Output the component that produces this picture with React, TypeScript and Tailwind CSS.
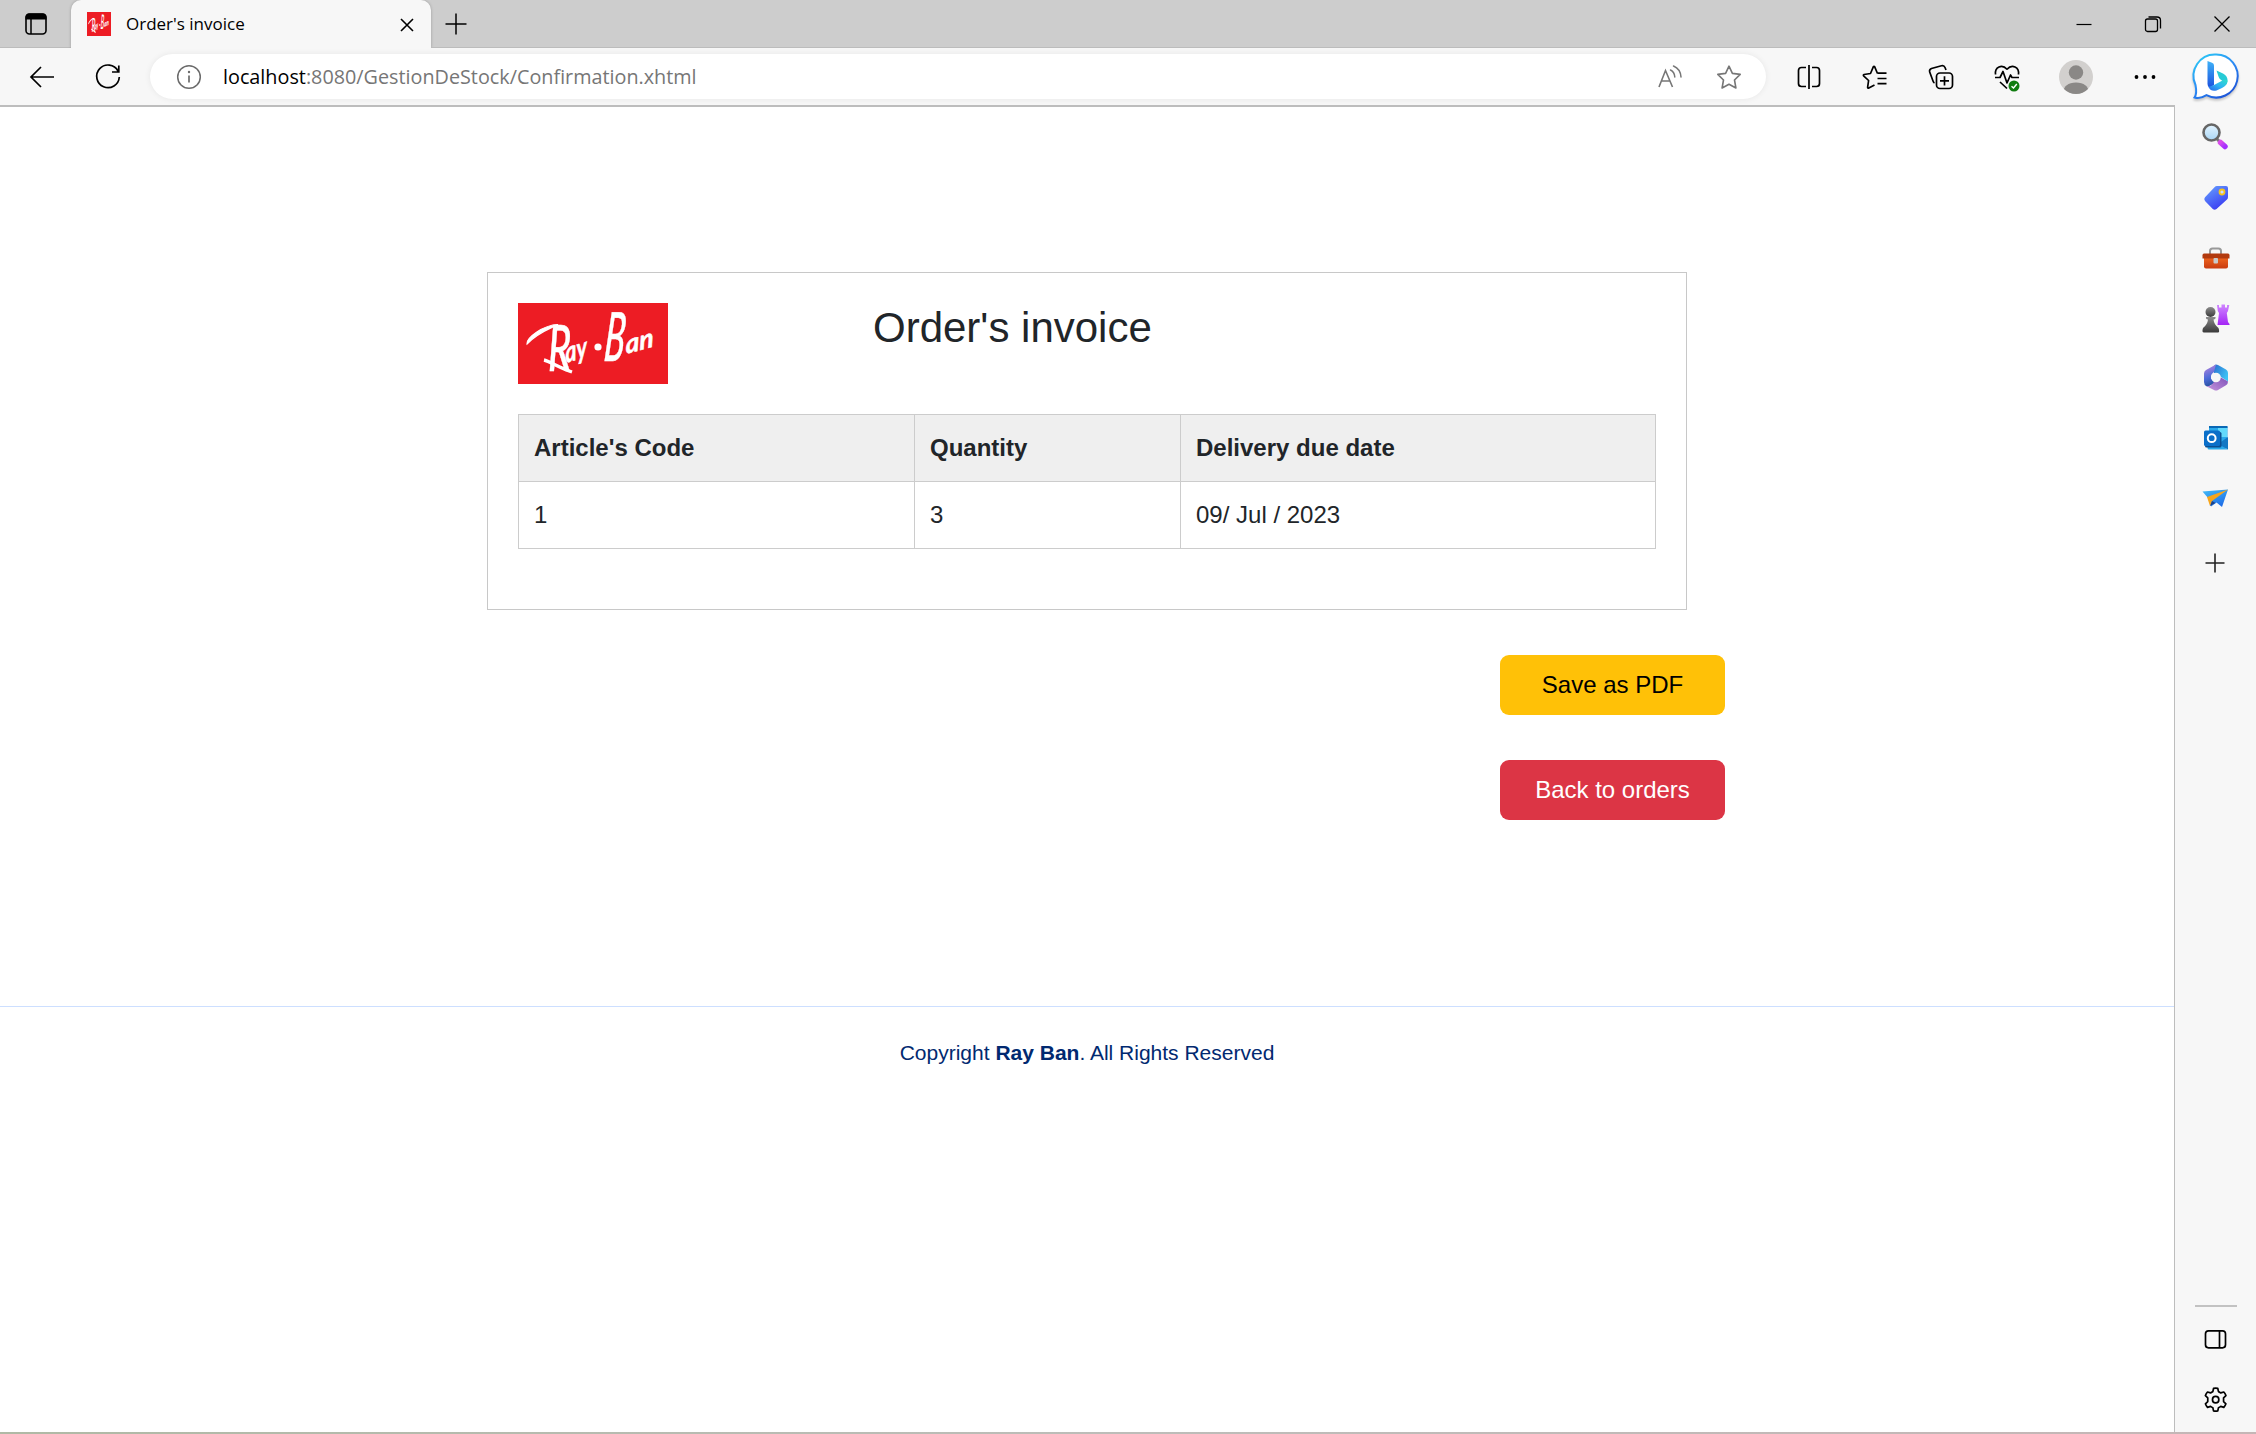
import React from "react";

type IconProps = { w: number; h: number; box?: string; children: React.ReactNode; className?: string };

const Icon = ({ w, h, box, children, className }: IconProps) => (
  <svg width={w} height={h} viewBox={box ?? `0 0 ${w} ${h}`} fill="none" className={"shrink-0 " + (className ?? "")}>
    {children}
  </svg>
);

const star = "M16 5.2 L19.4 12.4 L27.2 13.4 L21.5 19 L22.9 27 L16 23.2 L9.1 27 L10.5 19 L4.8 13.4 L12.6 12.4 Z";

function RayBanLogo({ className }: { className: string }) {
  return (
    <svg viewBox="0 0 150 81" preserveAspectRatio="none" className={"overflow-visible " + className}>
      <rect width="150" height="81" fill="#ed1c24" />
      <path d="M9 41C8 35 25 22 40 21.500C31 26 19 30 9 41Z" fill="#fff" stroke="#fff" strokeWidth="1.200" />
      <path d="M26 57C31 58 42 65 54 69" stroke="#fff" strokeWidth="3.400" fill="none" />
      <circle cx="80" cy="44" r="3.600" fill="#fff" />
      <g fill="#fff" stroke="#fff" strokeWidth="0.500" fontFamily="Lato, sans-serif" fontStyle="italic" fontWeight="500">
        <text transform="translate(30 68) scale(.62 1)" fontSize="64">R</text>
        <text transform="translate(48 60) rotate(-17) skewX(-12) scale(.8 1)" fontSize="28" fontWeight="700">ay</text>
        <text transform="translate(85 58) skewX(-5) scale(.5 1)" fontSize="68">B</text>
        <text transform="translate(108 51) rotate(-15) skewX(-12) scale(1.050 1)" fontSize="26" fontWeight="700">an</text>
      </g>
    </svg>
  );
}

function TabStrip() {
  return (
    <header className="flex h-12 shrink-0 bg-[#cdcdcd]">
      <div className="flex w-[71px] items-center border-b border-[#bcbcbc] pl-[24px]">
        <Icon w={24} h={24}>
          <rect x="2" y="2" width="20" height="20" rx="3.5" stroke="#000" strokeWidth="1.6" />
          <path d="M1.5 7.5V5Q1.5 1.5 5 1.5H19Q22.500 1.500 22.500 5V7.500Z" fill="#000" />
          <path d="M7 7V22" stroke="#000" strokeWidth="1.5" />
        </Icon>
      </div>
      <div className="flex w-[360px] items-center rounded-t-[10px] bg-[#f7f7f7] pl-4 shadow-[0_0_3px_rgba(0,0,0,0.25)]">
        <RayBanLogo className="size-6 shrink-0" />
        <span className="ml-[15px] grow text-[17px] leading-6 text-black">Order's invoice</span>
        <Icon w={24} h={24} className="mr-[12px] mt-px">
          <path d="M6 6L18 18M18 6L6 18" stroke="#000" strokeWidth="1.6" />
        </Icon>
      </div>
      <div className="flex grow items-center border-b border-[#bcbcbc] pl-[13px]">
        <Icon w={24} h={24}>
          <path d="M12 1.500V22.500M1.500 12H22.500" stroke="#000" strokeWidth="1.5" />
        </Icon>
      </div>
      <div className="flex w-[207px] items-center justify-around border-b border-[#bcbcbc]">
        <Icon w={18} h={18}><path d="M1.500 9.500H16.500" stroke="#000" strokeWidth="1.2" /></Icon>
        <Icon w={18} h={18}>
          <rect x="1.500" y="4" width="12" height="12.500" rx="2" stroke="#000" strokeWidth="1.3" />
          <path d="M4.500 2H13Q16.500 2 16.500 5.500V13.500" stroke="#000" strokeWidth="1.3" />
        </Icon>
        <Icon w={18} h={18}><path d="M1.500 1.500L16.500 16.500M16.500 1.500L1.500 16.500" stroke="#000" strokeWidth="1.3" /></Icon>
      </div>
    </header>
  );
}

function BingLogo() {
  return (
    <Icon w={54} h={54} className="-mt-px">
      <defs>
        <linearGradient id="bingRing" x1="0" y1="0" x2="0.7" y2="1">
          <stop offset="0" stopColor="#2bd0f5" /><stop offset="0.55" stopColor="#2b8cf5" /><stop offset="1" stopColor="#1d55d8" />
        </linearGradient>
        <linearGradient id="bingStem" x1="0" y1="0" x2="0" y2="1">
          <stop offset="0" stopColor="#3fb2f8" /><stop offset="1" stopColor="#1b4fdd" />
        </linearGradient>
        <linearGradient id="bingBowl" x1="1" y1="0" x2="0" y2="1">
          <stop offset="0" stopColor="#2ee0c8" /><stop offset="0.5" stopColor="#2fb3f2" /><stop offset="1" stopColor="#2563eb" />
        </linearGradient>
      </defs>
      <path d="M27 5.500A21.500 21.500 0 1 1 17.500 46.200C13 49 9 49.500 5.500 48.500C8 45 7.500 41 6.500 36A21.500 21.500 0 0 1 27 5.500Z" fill="#fff" stroke="url(#bingRing)" strokeWidth="2" className="drop-shadow-[0_2px_1px_rgba(0,0,0,0.2)]" />
      <path d="M18.500 12L23 13.700Q25 14.500 25 16.500V36L20.500 39Q18.500 37.500 18.500 35Z" fill="url(#bingStem)" />
      <path d="M27.500 21.500L34 24.500Q39 27 38.500 32.500Q38 35.500 35.500 37Q35.500 33 31.500 30.500Q30 29.500 29.500 27.500Z" fill="#27cbd6" />
      <path d="M38.500 31.500Q38.500 36 33 39L27.500 41.500Q22 43 19.500 38L25 36L33.500 31.500Q36.500 30 38.500 31.500Z" fill="url(#bingBowl)" />
    </Icon>
  );
}

function Toolbar() {
  return (
    <div className="flex h-[57px] shrink-0 items-center bg-[#f7f7f7]">
      <div className="flex w-[150px] items-center pl-[26px]">
        <Icon w={32} h={32}>
          <path d="M28 16H5M15 6L5 16L15 26" stroke="#000" strokeWidth="1.7" />
        </Icon>
        <Icon w={32} h={32} className="ml-[34px]">
          <path d="M26 10A11.300 11.300 0 1 0 27.300 16M26.800 4.500V11H20" stroke="#000" strokeWidth="1.700" />
        </Icon>
      </div>
      <div className="flex h-[45px] w-[1616px] items-center rounded-full bg-white pl-[23px] shadow-[0_0_6px_rgba(0,0,0,0.07)]">
        <Icon w={32} h={32}>
          <circle cx="16" cy="16" r="11.300" stroke="#6b6b6b" strokeWidth="1.500" />
          <path d="M16 14.500V21.500" stroke="#6b6b6b" strokeWidth="1.700" />
          <circle cx="16" cy="11" r="1.200" fill="#6b6b6b" />
        </Icon>
        <span className="ml-[18px] grow text-[19.8px] leading-7 text-[#767676]">
          <span className="text-black">localhost</span>:8080/GestionDeStock/Confirmation.xhtml
        </span>
        <Icon w={32} h={32} className="mr-[27px]">
          <path d="M5 26L11.500 9.500L18.500 26M7.300 20H16.200" stroke="#767676" strokeWidth="1.600" />
          <path d="M16.500 9Q20.500 11 20.800 16M19.500 5Q26.500 8 27 16" stroke="#767676" strokeWidth="1.500" strokeLinecap="round" />
        </Icon>
        <Icon w={32} h={32} className="mr-[21px]">
          <path d={star} stroke="#767676" strokeWidth="1.600" strokeLinejoin="round" />
        </Icon>
      </div>
      <div className="ml-[10px] flex w-[264px] justify-around">
        <Icon w={32} h={32}>
          <path d="M13 6.500H8.500Q5.500 6.500 5.500 9.500V22.500Q5.500 25.500 8.500 25.500H13M19 6.500H23.500Q26.500 6.500 26.500 9.500V22.500Q26.500 25.500 23.500 25.500H19M16 4V28" stroke="#000" strokeWidth="1.700" />
        </Icon>
        <Icon w={32} h={32}>
          <path d="M18.500 12.500L15.700 5.800Q15 4.800 14.300 5.800L11.500 12.500L5 13.500Q4 13.800 4.600 14.800L9.600 19.500L8.600 26.300Q8.700 27.500 9.800 27L15.500 24M18.500 12.200H27.500M18.500 17.500H27.500M18.500 22.700H27.500" stroke="#000" strokeWidth="1.700" strokeLinejoin="round" />
        </Icon>
        <Icon w={32} h={32}>
          <rect x="11.500" y="12" width="16" height="15.500" rx="3.500" stroke="#000" strokeWidth="1.700" />
          <path d="M19.500 15.200V24.500M15 19.800H24M21 9L20 6.500Q19 4 16.500 4.700L6.500 7.500Q4 8.500 4.700 11L8 20Q8.500 21.500 9.500 22" stroke="#000" strokeWidth="1.700" />
        </Icon>
        <Icon w={32} h={32}>
          <path d="M4.500 13.500C3.500 6 11 2.500 16 8.200C21 2.500 28.500 6 27.500 13.500M4 16.500H9L12 10.500L16 22L19.500 14L21 16.500H28M9 21L16 27.500" stroke="#000" strokeWidth="1.700" strokeLinejoin="round" />
          <circle cx="23" cy="25" r="5.500" fill="#107c10" />
          <path d="M20.500 25.200L22.500 27L25.800 23" stroke="#fff" strokeWidth="1.400" />
        </Icon>
      </div>
      <div className="flex w-[72px] justify-center">
        <Icon w={36} h={36}>
          <defs><clipPath id="avatarClip"><circle cx="18" cy="18" r="17" /></clipPath></defs>
          <circle cx="18" cy="18" r="17" fill="#d2d0ce" />
          <g clipPath="url(#avatarClip)" fill="#8a8886">
            <circle cx="18" cy="13.500" r="7.200" />
            <path d="M5 34Q6 23.500 18 23.500T31 34V36H5Z" />
          </g>
        </Icon>
      </div>
      <div className="flex w-[66px] justify-center">
        <Icon w={24} h={24}>
          <circle cx="3.500" cy="12" r="1.900" fill="#000" /><circle cx="12" cy="12" r="1.900" fill="#000" /><circle cx="20.500" cy="12" r="1.900" fill="#000" />
        </Icon>
      </div>
      <div className="flex w-[75px] justify-center"><BingLogo /></div>
    </div>
  );
}

function Sidebar() {
  return (
    <aside className="flex w-[81px] shrink-0 flex-col items-center bg-[#f7f7f7] pr-[2px]">
      <svg width="0" height="0" className="absolute">
        <defs>
          <linearGradient id="handle" x1="0" y1="0" x2="1" y2="1"><stop stopColor="#d94bea" /><stop offset="1" stopColor="#a42fff" /></linearGradient>
          <linearGradient id="lens" x1="0" y1="0" x2="0" y2="1"><stop stopColor="#e4f4ff" /><stop offset="1" stopColor="#a9d6f5" /></linearGradient>
          <linearGradient id="tag" x1="0" y1="0" x2="0.6" y2="1"><stop stopColor="#68a4ff" /><stop offset="1" stopColor="#3a3df2" /></linearGradient>
          <linearGradient id="box" x1="0" y1="0" x2="0" y2="1"><stop stopColor="#f0671f" /><stop offset="1" stopColor="#c93c10" /></linearGradient>
          <linearGradient id="pawn" x1="0" y1="0" x2="0" y2="1"><stop stopColor="#8c8c8c" /><stop offset="1" stopColor="#3a3a3a" /></linearGradient>
          <linearGradient id="rook" x1="0" y1="0" x2="0" y2="1"><stop stopColor="#cf86ff" /><stop offset="1" stopColor="#a425f5" /></linearGradient>
          <linearGradient id="m1" x1="0" y1="0" x2="1" y2="0.6"><stop stopColor="#2b6fd0" /><stop offset="1" stopColor="#3ec3f5" /></linearGradient>
          <linearGradient id="m2" x1="0.3" y1="0" x2="0.5" y2="1"><stop stopColor="#b583dc" /><stop offset="0.6" stopColor="#4c6bd8" /><stop offset="1" stopColor="#27509e" /></linearGradient>
          <linearGradient id="m3" x1="0" y1="1" x2="1" y2="0"><stop stopColor="#c695dc" /><stop offset="1" stopColor="#7c4fb8" /></linearGradient>
          <linearGradient id="plane" x1="0" y1="0" x2="0.6" y2="1"><stop stopColor="#43bdf7" /><stop offset="1" stopColor="#1f6fe8" /></linearGradient>
        </defs>
      </svg>
      <Icon w={60} h={60} className="mt-[2px]">
        <path d="M31 31L36 36" stroke="#777" strokeWidth="3" />
        <path d="M35.500 35.500L40 39.500" stroke="url(#handle)" strokeWidth="5.500" strokeLinecap="round" />
        <circle cx="26.500" cy="25.500" r="8" fill="url(#lens)" stroke="#666" strokeWidth="2.600" />
      </Icon>
      <Icon w={60} h={60}>
        <path d="M32 19H41Q43 19 43 21V30Q43 31.500 42 32.500L31.500 42Q29.500 43.500 27.800 42L20 34Q18.500 32 20 30.200L29.500 20.200Q30.500 19 32 19Z" fill="url(#tag)" />
        <circle cx="37" cy="25" r="2.500" fill="#cddcff" stroke="#f6c21c" strokeWidth="1.800" />
      </Icon>
      <Icon w={60} h={60}>
        <path d="M25 27V24Q25 21.500 27.500 21.500H33.500Q36 21.500 36 24V27" stroke="#999" strokeWidth="2" />
        <path d="M19 30H43V39.500Q43 41.500 41 41.500H21Q19 41.500 19 39.500Z" fill="url(#box)" />
        <path d="M17.500 28.200Q17.500 26.500 19 26.500H43Q44.500 26.500 44.500 28.200V31.500H17.500Z" fill="#b23a0e" />
        <rect x="28.500" y="31" width="4.500" height="5.500" rx="1" fill="#c9c9c9" />
      </Icon>
      <Icon w={60} h={60} className="translate-y-px">
        <path d="M32 17H34V19.500H36.500V16.500H40V19.500H42V17H44.300L43 23L41.800 25L43 34L44.500 36V37H32.500L34 25L32.800 23Z" fill="url(#rook)" />
        <circle cx="25.500" cy="24" r="5" fill="url(#pawn)" />
        <path d="M21 29H30.500Q31 31 28.500 31.500Q29 36.500 33.500 40Q35 44.500 33 44.500H19Q16.500 44.500 18 40Q22.500 36.500 23 31.500Q20.500 31 21 29Z" fill="url(#pawn)" />
      </Icon>
      <Icon w={60} h={60}>
        <path d="M31 17.500Q32 17.500 33 18L41 22.500Q43 23.700 43 26V34.500L34.500 29L29 26V19Q29.500 17.500 31 17.500Z" fill="url(#m1)" />
        <path d="M31 17.500L21 23Q19 24 19 26.500V35Q19 38 21.500 39.200Q23.500 40 25 38.500L30 36L26 31.500V29Q26 27 29 25Z" fill="url(#m2)" />
        <path d="M43 31V34.500Q43 37 41 38.200L33 43Q31 44 29 43L21.500 39.200Q24 39.500 26 38.500L29 35L34 29L36 30.500L43 34.500Z" fill="url(#m3)" />
        <circle cx="31" cy="30.500" r="4.800" fill="#f7f7f7" />
      </Icon>
      <Icon w={60} h={60} className="translate-y-px">
        <rect x="24" y="18" width="18.500" height="22" rx="1.500" fill="#28a8ea" />
        <path d="M33 19H42V29H33Z" fill="#62d9fb" /><path d="M24 18H42.500V20H24Z" fill="#0a68b5" />
        <path d="M22.500 30L43 41.500H24Q22.500 41.500 22.500 40Z" fill="#28a8ea" />
        <path d="M43 29V41.500L33 36Z" fill="#1277c4" />
        <rect x="20" y="24" width="16.500" height="15.500" rx="1.500" fill="#0b4f91" />
        <rect x="19" y="22.500" width="16" height="15.500" rx="1.500" fill="#0b6fc9" />
        <circle cx="26.700" cy="30.200" r="3.900" stroke="#fff" strokeWidth="2" />
      </Icon>
      <Icon w={60} h={60} className="translate-y-px">
        <path d="M17.500 23.500L43 21.500L37 39L31.500 34.500L26 38.500L23.500 30.500Z" fill="url(#plane)" />
        <path d="M43 21.500L22 29L25 38L27 33Z" fill="#f7a51c" />
        <path d="M25 38L27 33L30.500 35Z" fill="#1b438c" />
      </Icon>
      <Icon w={60} h={60} className="mt-[6px]"><path d="M30 20.500V39.500M20.500 30H39.500" stroke="#222" strokeWidth="1.600" /></Icon>
      <div className="mt-auto ml-[2px] h-[2px] w-[42px] bg-[#c2c2c2]" />
      <Icon w={60} h={60} className="mt-[3px]">
        <rect x="20.500" y="20.800" width="20" height="17" rx="3" stroke="#000" strokeWidth="1.700" />
        <path d="M34.500 21V38" stroke="#000" strokeWidth="1.700" />
      </Icon>
      <Icon w={60} h={60} className="mb-[2px]">
        <g transform="translate(16.500 15.500) scale(1.180)" stroke="#000" strokeWidth="1.450" strokeLinejoin="round">
          <path d="M10.200 2.500Q12 2.100 13.800 2.500L14.400 5.200Q15.400 5.700 16.300 6.300L18.900 5.500Q20.100 6.800 20.700 8.500L18.700 10.400V13.600L20.700 15.500Q20.100 17.200 18.900 18.500L16.300 17.700Q15.400 18.300 14.400 18.800L13.800 21.500Q12 21.900 10.200 21.500L9.600 18.800Q8.600 18.300 7.700 17.700L5.100 18.500Q3.900 17.200 3.300 15.500L5.300 13.600V10.400L3.300 8.500Q3.900 6.800 5.100 5.500L7.700 6.300Q8.600 5.700 9.600 5.200Z" />
          <circle cx="12" cy="12" r="2.700" />
        </g>
      </Icon>
    </aside>
  );
}

const cell = "border border-[#cccccc] px-[15px] text-left";

function InvoicePage() {
  return (
    <main className="flex grow flex-col border-r border-t-2 border-[#bdbdbd] bg-white font-['Liberation_Sans',sans-serif] text-[24px] text-[#212529]">
      <section className="mt-[165px] ml-[487px] h-[338px] w-[1200px] border border-[#c8c8c8] p-[30px]">
        <div className="flex h-[111px] items-start">
          <RayBanLogo className="h-[81px] w-[150px]" />
          <h1 className="ml-[205px] text-[42px] leading-[50px]">Order's invoice</h1>
        </div>
        <table className="w-[1138px] table-fixed border-collapse leading-9">
          <colgroup><col className="w-[396px]" /><col className="w-[266px]" /><col /></colgroup>
          <thead>
            <tr className="h-[67px] bg-[#efefef]">
              <th className={cell}>Article's Code</th>
              <th className={cell}>Quantity</th>
              <th className={cell}>Delivery due date</th>
            </tr>
          </thead>
          <tbody>
            <tr className="h-[67px]">
              <td className={cell}>1</td>
              <td className={cell}>3</td>
              <td className={cell}>09/ Jul / 2023</td>
            </tr>
          </tbody>
        </table>
      </section>
      <div className="mt-[45px] ml-[1500px] flex w-[225px] flex-col gap-[45px]">
        <button className="h-[60px] rounded-[9px] bg-[#ffc107] text-black">Save as PDF</button>
        <button className="h-[60px] rounded-[9px] bg-[#dc3545] text-white">Back to orders</button>
      </div>
      <footer className="mt-[186px] border-t border-[#cddfff] pt-[30px] text-center text-[21px] leading-[31.5px] text-[#012970]">
        Copyright <strong>Ray Ban</strong>. All Rights Reserved
      </footer>
    </main>
  );
}

export default function App() {
  return (
    <div className="flex h-[1434px] w-[2256px] flex-col overflow-hidden bg-[#f7f7f7] font-['Open_Sans',sans-serif]">
      <TabStrip />
      <Toolbar />
      <div className="flex min-h-0 grow">
        <InvoicePage />
        <Sidebar />
      </div>
      <div className="h-[2px] shrink-0 bg-linear-to-r from-[#b0b9a5] via-[#bdbdb9] to-[#c5b6b6]" />
    </div>
  );
}
